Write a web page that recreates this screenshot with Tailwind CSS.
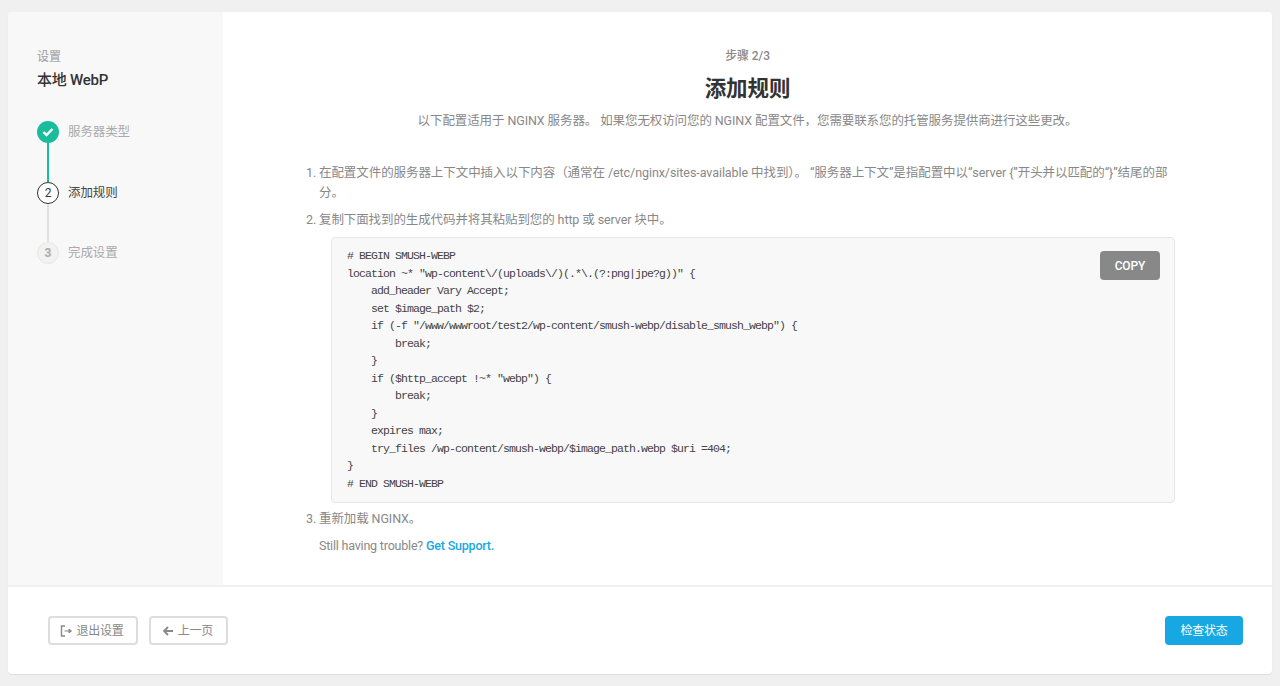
<!DOCTYPE html>
<html lang="zh">
<head>
<meta charset="utf-8"/>
<title>添加规则</title>
<script src="https://cdn.jsdelivr.net/npm/@tailwindcss/browser@4"></script>
</head>
<body class="bg-[#f0f0f0] font-['Roboto','Noto_Sans_CJK_SC',sans-serif] text-[12.5px] tracking-[-0.1px] text-[#888] overflow-hidden">
<div class="h-[686px] pt-3 pb-3 px-2">
  <div class="w-[1264px] h-[662px] bg-white rounded-[4px] shadow-[0_1px_1px_rgba(0,0,0,0.08)] flex flex-col overflow-hidden">
    <div class="flex h-[573px]">
      <!-- sidebar -->
      <aside class="w-[215px] bg-[#f8f8f8] pl-[29px] pt-[34px]">
        <div class="text-[12px] leading-[22px] text-[#aaa] font-medium">设置</div>
        <div class="text-[15px] leading-[24px] font-medium tracking-[-0.25px] text-[#333]">本地 WebP</div>
        <div class="mt-[29px]">
          <div class="flex items-center gap-[9px] h-[22px]">
            <div class="w-[22px] h-[22px] rounded-full bg-[#1abc9c] flex items-center justify-center">
              <svg width="12" height="10" viewBox="0 0 12 10"><path d="M1.5 5.2 4.5 8 10.5 2" fill="none" stroke="#fff" stroke-width="2.4"/></svg>
            </div>
            <span class="text-[#aaa]">服务器类型</span>
          </div>
          <div class="w-[2px] h-[39px] bg-[#1abc9c] ml-[10px]"></div>
          <div class="flex items-center gap-[9px] h-[22px]">
            <div class="w-[22px] h-[22px] rounded-full border border-[#333] bg-white flex items-center justify-center text-[12px] text-[#333]">2</div>
            <span class="text-[#444]">添加规则</span>
          </div>
          <div class="w-[2px] h-[38px] bg-[#e2e2e2] ml-[10px]"></div>
          <div class="flex items-center gap-[9px] h-[22px]">
            <div class="w-[22px] h-[22px] rounded-full border border-[#e6e6e6] bg-[#f2f2f2] flex items-center justify-center text-[12px] font-bold text-[#aaa]">3</div>
            <span class="text-[#aaa]">完成设置</span>
          </div>
        </div>
      </aside>
      <!-- main -->
      <main class="flex-1 pt-[33px]">
        <div class="text-center text-[12px] leading-[22px] font-medium text-[#888]">步骤 2/3</div>
        <h1 class="mt-[7px] text-center text-[21.5px] leading-[30px] font-bold text-[#333]">添加规则</h1>
        <p class="mt-[6px] text-center leading-[22px] text-[#888]">以下配置适用于 NGINX 服务器。 如果您无权访问您的 NGINX 配置文件，您需要联系您的托管服务提供商进行这些更改。</p>
        <ol class="mt-[31px] pl-[83px] pr-[97px]">
          <li class="flex leading-[20px]">
            <span class="w-[13px] shrink-0">1.</span>
            <span class="w-[852px] tracking-[-0.07px]">在配置文件的服务器上下文中插入以下内容（通常在 /etc/nginx/sites-available 中找到）。 “服务器上下文”是指配置中以“server {”开头并以匹配的“}”结尾的部分。</span>
          </li>
          <li class="flex leading-[20px] mt-[7px]">
            <span class="w-[13px] shrink-0">2.</span>
            <span>复制下面找到的生成代码并将其粘贴到您的 http 或 server 块中。</span>
          </li>
        </ol>
        <div class="relative mt-[7px] ml-[108px] w-[844px] h-[266px] bg-[#f8f8f8] border border-[#e6e6e6] rounded-[4px] pl-[15px] pt-[9px]">
          <pre class="font-['Liberation_Mono',monospace] text-[11.5px] leading-[17.5px] tracking-[-0.9px] text-[#444]"># BEGIN SMUSH-WEBP
location ~* "wp-content\/(uploads\/)(.*\.(?:png|jpe?g))" {
    add_header Vary Accept;
    set $image_path $2;
    if (-f "/www/wwwroot/test2/wp-content/smush-webp/disable_smush_webp") {
        break;
    }
    if ($http_accept !~* "webp") {
        break;
    }
    expires max;
    try_files /wp-content/smush-webp/$image_path.webp $uri =404;
}
# END SMUSH-WEBP</pre>
          <button class="absolute top-[13px] right-[14px] w-[60px] h-[29px] rounded-[4px] bg-[#888] text-white text-[12px] font-medium">COPY</button>
        </div>
        <div class="flex pl-[83px] mt-[6px] leading-[20px]">
          <span class="w-[13px] shrink-0">3.</span>
          <span>重新加载 NGINX。</span>
        </div>
        <p class="pl-[96px] mt-[7px] leading-[20px] tracking-[-0.2px]">Still having trouble? <a class="text-[#17a8e3] font-medium" href="#">Get Support.</a></p>
      </main>
    </div>
    <!-- footer -->
    <footer class="flex-1 border-t-2 border-[#f0f0f0] flex items-center justify-between pl-[40px] pr-[29px]">
      <div class="flex gap-[11px]">
        <button class="w-[90px] h-[29px] rounded-[4px] border-2 border-[#ddd] flex items-center justify-center gap-[4px] pr-[2px] text-[12px] tracking-[-0.25px] text-[#888]">
          <svg width="12" height="12" viewBox="0 0 12 12"><path d="M5 1H1.5v10H5" fill="none" stroke="#888" stroke-width="1.4"/><path d="M4.5 6H9V4l2.5 2L9 8V6" fill="#888" stroke="#888" stroke-width="1"/></svg>
          退出设置
        </button>
        <button class="w-[79px] h-[29px] rounded-[4px] border-2 border-[#ddd] flex items-center justify-center gap-[4px] pr-[2px] text-[12px] tracking-[-0.25px] text-[#888]">
          <svg width="12" height="12" viewBox="0 0 12 12"><path d="M11 6H2M6 2 2 6l4 4" fill="none" stroke="#888" stroke-width="1.8"/></svg>
          上一页
        </button>
      </div>
      <button class="w-[78px] h-[29px] rounded-[4px] bg-[#17a8e3] text-white text-[12px] tracking-[-0.25px]">检查状态</button>
    </footer>
  </div>
</div>
</body>
</html>
